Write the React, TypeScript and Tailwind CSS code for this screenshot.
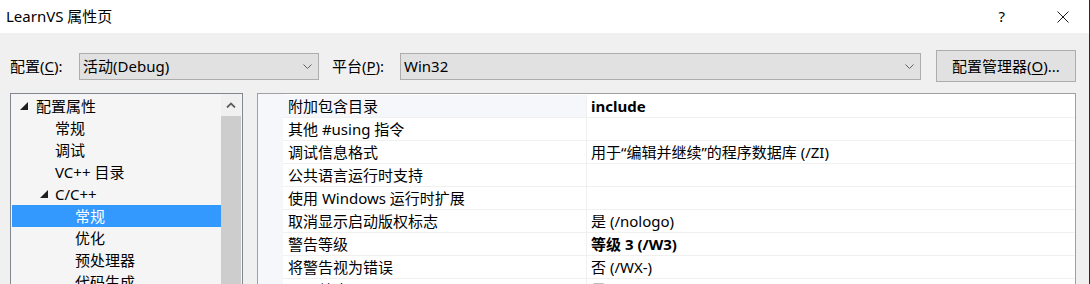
import React from 'react';

const FONT = "font-['Noto_Sans','Noto_Sans_CJK_SC',sans-serif]";

type TreeItem = { label: string; indent: number; expander?: boolean; selected?: boolean };

const treeItems: TreeItem[] = [
  { label: '配置属性', indent: 0, expander: true },
  { label: '常规', indent: 1 },
  { label: '调试', indent: 1 },
  { label: 'VC++ 目录', indent: 1 },
  { label: 'C/C++', indent: 1, expander: true },
  { label: '常规', indent: 2, selected: true },
  { label: '优化', indent: 2 },
  { label: '预处理器', indent: 2 },
  { label: '代码生成', indent: 2 },
];

type Prop = { name: string; value: string; bold?: boolean; active?: boolean };

const props: Prop[] = [
  { name: '附加包含目录', value: 'include', bold: true, active: true },
  { name: '其他 #using 指令', value: '' },
  { name: '调试信息格式', value: '用于“编辑并继续”的程序数据库 (/ZI)' },
  { name: '公共语言运行时支持', value: '' },
  { name: '使用 Windows 运行时扩展', value: '' },
  { name: '取消显示启动版权标志', value: '是 (/nologo)' },
  { name: '警告等级', value: '等级 3 (/W3)', bold: true },
  { name: '将警告视为错误', value: '否 (/WX-)' },
  { name: 'SDL 检查', value: '是 (/sdl)', bold: true },
];

function Chevron() {
  return (
    <svg width="9" height="5" viewBox="0 0 9 5" className="shrink-0">
      <path d="M0.5 0.5 L4.5 4.5 L8.5 0.5" fill="none" stroke="#606060" strokeWidth="1" />
    </svg>
  );
}

function Expander() {
  return (
    <svg width="8" height="8" viewBox="0 0 8 8" className="shrink-0">
      <polygon points="8,0 8,8 0,8" fill="#1e1e1e" />
    </svg>
  );
}

function Combo({ value, width }: { value: string; width: string }) {
  return (
    <div className={`${width} h-[27px] flex items-center justify-between bg-[#e1e1e1] border border-[#adadad] pl-[3px] pr-[6px]`}>
      <span className="text-[15px] leading-none text-black">{value}</span>
      <Chevron />
    </div>
  );
}

export default function App() {
  return (
    <div className={`${FONT} w-[1090px] h-[284px] overflow-hidden bg-[#f0f0f0] text-black border-r border-[#2b2b2b]`}>
      {/* title bar */}
      <div className="h-[33px] bg-white flex items-center pl-[6px] pr-[20px]">
        <span className="text-[15px] leading-none">LearnVS 属性页</span>
        <span className="ml-auto text-[15px] leading-none mr-[52px]">?</span>
        <svg width="12" height="12" viewBox="0 0 12 12">
          <path d="M0.5 0.5 L11.5 11.5 M11.5 0.5 L0.5 11.5" stroke="#1e1e1e" strokeWidth="1" />
        </svg>
      </div>

      {/* configuration row */}
      <div className="pt-[17px] pl-[10px] flex items-center h-[49px]">
        <span className="w-[69px] text-[15px] leading-none">
          配置(<u className="underline-offset-2">C</u>):
        </span>
        <Combo value="活动(Debug)" width="w-[240px]" />
        <span className="ml-[13px] w-[68px] text-[15px] leading-none">
          平台(<u className="underline-offset-2">P</u>):
        </span>
        <Combo value="Win32" width="w-[521px]" />
        <div className="ml-[15px] w-[140px] h-[32px] flex items-center justify-center bg-[#e1e1e1] border border-[#adadad] text-[15px] leading-none">
          配置管理器(<u className="underline-offset-2">O</u>)...
        </div>
      </div>

      {/* panels */}
      <div className="mt-[11px] pl-[10px] flex items-start">
        {/* tree */}
        <div className="w-[233px] h-[200px] border border-[#828790] bg-[#f5f5f5] flex">
          <div className="flex-1 pt-[1px] pl-[1px]">
            {treeItems.map((it, i) => (
              <div
                key={i}
                className={`h-[22px] flex items-center text-[15px] leading-none ${
                  it.selected ? 'bg-[#3399ff] text-white' : ''
                }`}
              >
                {it.indent === 0 && (
                  <div className="flex items-center pl-[8px]">
                    <Expander />
                    <span className="ml-[8px]">{it.label}</span>
                  </div>
                )}
                {it.indent === 1 && (
                  <div className="flex items-center">
                    <div className="w-[43px] flex justify-end pr-[7px]">{it.expander && <Expander />}</div>
                    <span>{it.label}</span>
                  </div>
                )}
                {it.indent === 2 && <span className="pl-[63px]">{it.label}</span>}
              </div>
            ))}
          </div>
          <div className="w-[20px] mr-[1px] flex flex-col">
            <div className="h-[22px] bg-[#f0f0f0] flex items-center justify-center">
              <svg width="10" height="6" viewBox="0 0 10 6">
                <path d="M1 5.5 L5 1.5 L9 5.5" fill="none" stroke="#606060" strokeWidth="1.8" />
              </svg>
            </div>
            <div className="flex-1 bg-[#cdcdcd]" />
          </div>
        </div>

        {/* property grid */}
        <div className="ml-[14px] w-[819px] h-[200px] border border-[#a0a0a0] bg-white flex">
          <div className="w-[25px] bg-[#f5f7fb]" />
          <div className="flex-1 pt-[1px]">
            {props.map((p, i) => (
              <div key={i} className="h-[23px] flex border-b border-[#f0f0f0]">
                <div
                  className={`w-[304px] flex items-center pl-[5px] border-r border-[#f0f0f0] text-[15px] leading-none ${
                    p.active ? 'bg-[#f5f7fb]' : ''
                  }`}
                >
                  {p.name}
                </div>
                <div className={`flex-1 flex items-center pl-[4px] text-[15px] leading-none ${p.bold ? 'font-bold' : ''}`}>
                  {p.value}
                </div>
              </div>
            ))}
          </div>
        </div>
      </div>
    </div>
  );
}
